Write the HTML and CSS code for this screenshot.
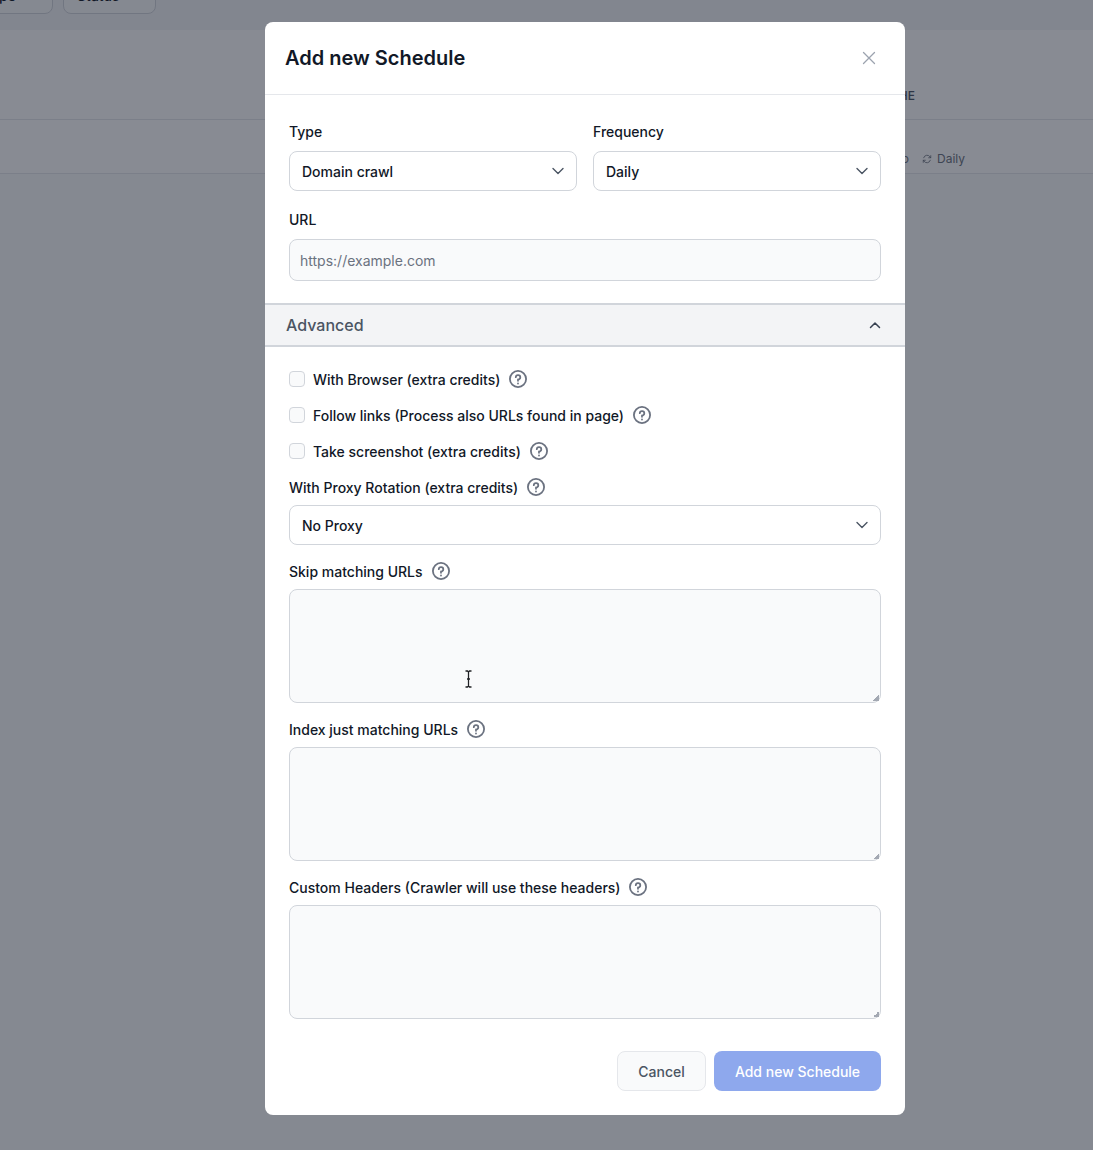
FILE: index.html
```html
<!DOCTYPE html>
<html lang="en">
<head>
<meta charset="utf-8">
<title>Add new Schedule</title>
<link rel="stylesheet" href="styles.css">
</head>
<body>
<div class="page">
  <div class="toolbar">
    <div class="filter filter-type">Type</div>
    <div class="filter filter-status">Status</div>
  </div>
  <div class="panel">
    <div class="table-head"><span>Cache</span></div>
    <div class="table-row">
      <span class="cell-name">Demo</span>
      <span class="cell-freq">
        <svg class="refresh" viewBox="0 0 24 24" fill="none" stroke="currentColor" stroke-width="2" stroke-linecap="round" stroke-linejoin="round"><path d="M4 9a8.5 8.5 0 0 1 15-2.5L21 9M21 4v5h-5M20 15a8.5 8.5 0 0 1-15 2.5L3 15M3 20v-5h5"/></svg>
        Daily
      </span>
    </div>
  </div>
</div>

<div class="overlay">
  <div class="modal">
    <header class="modal-head">
      <h2 class="modal-title">Add new Schedule</h2>
      <svg class="close" viewBox="0 0 14 14" fill="none" stroke="currentColor" stroke-width="1.3" stroke-linecap="round"><path d="M1.5 1.5l11 11M12.5 1.5l-11 11"/></svg>
    </header>

    <section class="basic">
      <div class="two-col">
        <div class="field">
          <div class="label first-label">Type</div>
          <div class="select"><span class="txt">Domain crawl</span>
            <svg class="chevron" viewBox="0 0 12 8" fill="none" stroke="currentColor" stroke-width="1.4" stroke-linecap="round" stroke-linejoin="round"><path d="M1 1.5l5 5 5-5"/></svg>
          </div>
        </div>
        <div class="field">
          <div class="label first-label">Frequency</div>
          <div class="select"><span class="txt">Daily</span>
            <svg class="chevron" viewBox="0 0 12 8" fill="none" stroke="currentColor" stroke-width="1.4" stroke-linecap="round" stroke-linejoin="round"><path d="M1 1.5l5 5 5-5"/></svg>
          </div>
        </div>
      </div>
      <div class="label url-label">URL</div>
      <input class="input" type="text" placeholder="https://example.com">
    </section>

    <div class="accordion">
      <span>Advanced</span>
      <svg class="chevron-up" viewBox="0 0 12 8" fill="none" stroke="currentColor" stroke-width="1.5" stroke-linecap="round" stroke-linejoin="round"><path d="M1.5 6.5L6 2l4.5 4.5"/></svg>
    </div>

    <section class="advanced">
      <label class="check-row"><input class="check" type="checkbox"><span class="txt">With Browser (extra credits)</span>
        <svg class="help" viewBox="0 0 20 20" fill="none" stroke="currentColor" stroke-width="2" stroke-linecap="round" stroke-linejoin="round"><path d="M7.529 7.988a2.502 2.502 0 0 1 5 .191A2.441 2.441 0 0 1 10 10.582V12m-.01 3.008H10M19 10a9 9 0 1 1-18 0 9 9 0 0 1 18 0Z"/></svg>
      </label>
      <label class="check-row"><input class="check" type="checkbox"><span class="txt">Follow links (Process also URLs found in page)</span>
        <svg class="help" viewBox="0 0 20 20" fill="none" stroke="currentColor" stroke-width="2" stroke-linecap="round" stroke-linejoin="round"><path d="M7.529 7.988a2.502 2.502 0 0 1 5 .191A2.441 2.441 0 0 1 10 10.582V12m-.01 3.008H10M19 10a9 9 0 1 1-18 0 9 9 0 0 1 18 0Z"/></svg>
      </label>
      <label class="check-row"><input class="check" type="checkbox"><span class="txt">Take screenshot (extra credits)</span>
        <svg class="help" viewBox="0 0 20 20" fill="none" stroke="currentColor" stroke-width="2" stroke-linecap="round" stroke-linejoin="round"><path d="M7.529 7.988a2.502 2.502 0 0 1 5 .191A2.441 2.441 0 0 1 10 10.582V12m-.01 3.008H10M19 10a9 9 0 1 1-18 0 9 9 0 0 1 18 0Z"/></svg>
      </label>

      <div class="check-row label-row"><span class="txt">With Proxy Rotation (extra credits)</span>
        <svg class="help" viewBox="0 0 20 20" fill="none" stroke="currentColor" stroke-width="2" stroke-linecap="round" stroke-linejoin="round"><path d="M7.529 7.988a2.502 2.502 0 0 1 5 .191A2.441 2.441 0 0 1 10 10.582V12m-.01 3.008H10M19 10a9 9 0 1 1-18 0 9 9 0 0 1 18 0Z"/></svg>
      </div>
      <div class="select"><span class="txt">No Proxy</span>
        <svg class="chevron" viewBox="0 0 12 8" fill="none" stroke="currentColor" stroke-width="1.4" stroke-linecap="round" stroke-linejoin="round"><path d="M1 1.5l5 5 5-5"/></svg>
      </div>

      <div class="check-row label-row area-label"><span class="txt">Skip matching URLs</span>
        <svg class="help" viewBox="0 0 20 20" fill="none" stroke="currentColor" stroke-width="2" stroke-linecap="round" stroke-linejoin="round"><path d="M7.529 7.988a2.502 2.502 0 0 1 5 .191A2.441 2.441 0 0 1 10 10.582V12m-.01 3.008H10M19 10a9 9 0 1 1-18 0 9 9 0 0 1 18 0Z"/></svg>
      </div>
      <textarea class="area"></textarea>

      <div class="check-row label-row area-label"><span class="txt">Index just matching URLs</span>
        <svg class="help" viewBox="0 0 20 20" fill="none" stroke="currentColor" stroke-width="2" stroke-linecap="round" stroke-linejoin="round"><path d="M7.529 7.988a2.502 2.502 0 0 1 5 .191A2.441 2.441 0 0 1 10 10.582V12m-.01 3.008H10M19 10a9 9 0 1 1-18 0 9 9 0 0 1 18 0Z"/></svg>
      </div>
      <textarea class="area"></textarea>

      <div class="check-row label-row area-label"><span class="txt">Custom Headers (Crawler will use these headers)</span>
        <svg class="help help-tight" viewBox="0 0 20 20" fill="none" stroke="currentColor" stroke-width="2" stroke-linecap="round" stroke-linejoin="round"><path d="M7.529 7.988a2.502 2.502 0 0 1 5 .191A2.441 2.441 0 0 1 10 10.582V12m-.01 3.008H10M19 10a9 9 0 1 1-18 0 9 9 0 0 1 18 0Z"/></svg>
      </div>
      <textarea class="area"></textarea>

      <footer class="actions">
        <button class="btn btn-cancel" type="button">Cancel</button>
        <button class="btn btn-primary" type="button">Add new Schedule</button>
      </footer>
    </section>
  </div>
</div>

<svg class="text-cursor" viewBox="0 0 9 18" fill="none"><path d="M1.5 1h2l1 1 1-1h2M4.5 2v14M1.5 17h2l1-1 1 1h2M3 9h3" stroke="#fff" stroke-width="3"/><path d="M1.5 1h2l1 1 1-1h2M4.5 2v14M1.5 17h2l1-1 1 1h2M3 9h3" stroke="#1f2024" stroke-width="1.3"/></svg>
</body>
</html>
```

FILE: styles.css
```css
* { box-sizing: border-box; }

html, body {
  margin: 0;
  height: 100%;
  overflow: hidden;
}

body {
  font-family: Inter, "Liberation Sans", sans-serif;
  font-size: 14px;
  line-height: 20px;
  color: #111827;
  background: #f9fafb;
}

/* page under the dialog */
.page {
  height: 100%;
  display: flex;
  flex-direction: column;
}

.toolbar {
  height: 30px;
  flex: none;
  display: flex;
  gap: 10px;
  background: #f3f4f6;
  overflow: hidden;
}

.filter {
  height: 40px;
  flex: none;
  margin-top: -26px;
  padding: 11px 13px 0;
  background: #f9fafb;
  border: 1px solid #d1d5db;
  border-radius: 8px;
  font-weight: 500;
}

.filter-type {
  width: 83px;
  margin-left: -30px;
  padding-left: 0;
  text-align: right;
  padding-right: 36px;
}

.filter-status { width: 93px; }

.panel {
  background: #fff;
  flex: none;
}

.table-head {
  height: 90px;
  padding: 58px 178px 0 0;
  display: flex;
  justify-content: flex-end;
  border-bottom: 1px solid #e5e7eb;
  font-size: 12px;
  line-height: 16px;
  font-weight: 500;
  text-transform: uppercase;
  color: #4b5563;
}

.table-row {
  height: 54px;
  padding: 29px 128px 0 0;
  display: flex;
  justify-content: flex-end;
  gap: 13px;
  border-bottom: 1px solid #e5e7eb;
  font-size: 12px;
  line-height: 20px;
  color: #6b7280;
}

.cell-freq {
  display: flex;
  align-items: center;
  align-self: flex-start;
  gap: 5px;
}

.refresh { width: 10px; height: 10px; }

/* dialog */
.overlay {
  position: fixed;
  inset: 0;
  padding: 22px 0 0 265px;
  background: rgba(17, 24, 39, .5);
}

.modal {
  width: 640px;
  height: 1093px;
  background: #fff;
  border-radius: 8px;
}

.modal-head {
  height: 73px;
  padding: 0 29px 0 20px;
  display: flex;
  align-items: center;
  justify-content: space-between;
  border-bottom: 1px solid #e5e7eb;
}

.modal-title {
  margin: 0;
  font-size: 20px;
  line-height: 28px;
  font-weight: 600;
  color: #111827;
}

.close {
  width: 14px;
  height: 14px;
  color: #9ca3af;
}

.basic {
  padding: 26px 24px 22px;
}

.two-col {
  display: grid;
  grid-template-columns: 1fr 1fr;
  gap: 16px;
}

.label {
  padding-top: 1px;
  font-weight: 500;
  color: #111827;
}

.first-label { margin-bottom: 9px; }

.url-label { margin: 18px 0 9px; }

/* nudges a text down 1px while its flex row stays centred */
.txt { padding-top: 2px; }

.select {
  height: 40px;
  padding: 0 12px;
  display: flex;
  align-items: center;
  justify-content: space-between;
  background: #fff;
  border: 1px solid #d1d5db;
  border-radius: 8px;
  font-weight: 500;
  color: #111827;
}

.chevron {
  width: 12px;
  height: 8px;
  color: #4b5563;
}

.input {
  display: block;
  width: 100%;
  height: 42px;
  padding: 0 10px;
  background: #f9fafb;
  border: 1px solid #d1d5db;
  border-radius: 8px;
  font: 14px/20px Inter, "Liberation Sans", sans-serif;
  color: #111827;
}

.input::placeholder { color: #6b7280; opacity: 1; }

.accordion {
  height: 44px;
  padding: 0 24px 0 21px;
  display: flex;
  align-items: center;
  justify-content: space-between;
  background: #f3f4f6;
  border-top: 2px solid #d1d5db;
  border-bottom: 2px solid #d1d5db;
  font-size: 16px;
  line-height: 24px;
  font-weight: 500;
  color: #4b5563;
}

.chevron-up {
  width: 12px;
  height: 8px;
  color: #374151;
}

.advanced {
  padding: 22px 24px 24px;
}

.check-row {
  display: flex;
  align-items: center;
  height: 20px;
  margin-bottom: 16px;
  font-weight: 500;
  color: #111827;
}

.check {
  appearance: none;
  width: 16px;
  height: 16px;
  margin: 0 8px 0 0;
  background: #f9fafb;
  border: 1px solid #d1d5db;
  border-radius: 4px;
}

.help {
  width: 18px;
  height: 18px;
  margin-left: 9px;
  color: #6b7280;
  flex: none;
}

.help-tight { margin-left: 8px; }

.label-row { margin-bottom: 8px; }

.area-label { margin-top: 16px; }

.area {
  display: block;
  width: 100%;
  height: 114px;
  padding: 10px;
  background: #f9fafb;
  border: 1px solid #d1d5db;
  border-radius: 8px;
  font: 14px/20px Inter, "Liberation Sans", sans-serif;
}

.area::-webkit-resizer {
  background: linear-gradient(135deg, transparent 50%, #a3a8b2 50%, #a3a8b2 100%) right 1px bottom 1px / 6px 6px no-repeat;
}

.actions {
  margin-top: 32px;
  display: flex;
  justify-content: flex-end;
  gap: 8px;
}

.btn {
  height: 40px;
  padding-top: 2px;
  border-radius: 8px;
  font: 500 14px/20px Inter, "Liberation Sans", sans-serif;
}

.btn-cancel {
  width: 89px;
  background: #f9fafb;
  border: 1px solid #e5e7eb;
  color: #4b5563;
}

.btn-primary {
  width: 167px;
  background: #8ea8ed;
  border: 0;
  color: #fff;
}

/* mouse pointer over the field */
.text-cursor {
  position: fixed;
  left: 464px;
  top: 670px;
  width: 9px;
  height: 18px;
}
```
